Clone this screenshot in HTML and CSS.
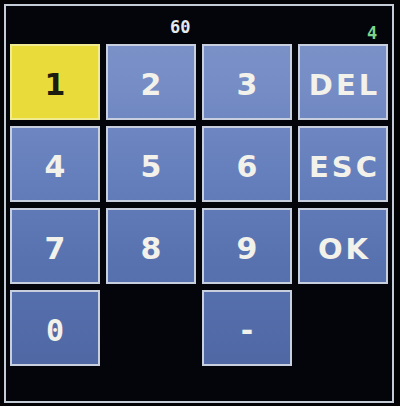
FILE: index.html
```html
<!DOCTYPE html>
<html>
<head>
<meta charset="utf-8">
<link rel="stylesheet" href="styles.css">
</head>
<body>
<div class="screen">
  <div class="header">
    <span class="value">60</span>
    <span class="count">4</span>
  </div>
  <div class="pad">
    <div class="key active">1</div>
    <div class="key">2</div>
    <div class="key">3</div>
    <div class="key word">DEL</div>
    <div class="key">4</div>
    <div class="key">5</div>
    <div class="key">6</div>
    <div class="key word">ESC</div>
    <div class="key">7</div>
    <div class="key">8</div>
    <div class="key">9</div>
    <div class="key word">OK</div>
    <div class="key zero">0</div>
    <div class="empty"></div>
    <div class="key">-</div>
    <div class="empty"></div>
  </div>
</div>
</body>
</html>
```
FILE: styles.css
```css
html, body {
  margin: 0;
  padding: 0;
  background: #030306;
  width: 400px;
  height: 406px;
  overflow: hidden;
}
.screen {
  margin: 4px 0 0 4px;
  width: 386px;
  height: 395px;
  border: 2px solid #c4ccd8;
  background: #04050a;
  display: flex;
  flex-direction: column;
}
.header {
  height: 38px;
  position: relative;
  font-family: "DejaVu Sans Mono", monospace;
  font-weight: bold;
}
.value {
  position: absolute;
  left: 164px;
  top: 11px;
  font-size: 17px;
  color: #e4e8f0;
}
.count {
  position: absolute;
  left: 361px;
  top: 17px;
  font-size: 17px;
  color: #7cd48c;
}
.pad {
  display: grid;
  grid-template-columns: repeat(4, 90px);
  grid-auto-rows: 76px;
  column-gap: 6px;
  row-gap: 6px;
  padding-left: 4px;
}
.key {
  box-sizing: border-box;
  border: 2px solid #c8d0e0;
  padding-top: 5px;
  background: linear-gradient(180deg, #7f96cb 0px, #758cc5 90px, #6680bd 170px, #5872b0 260px, #4f68a4 370px) fixed;
  color: #f2f1ea;
  display: flex;
  align-items: center;
  justify-content: center;
  font-family: "DejaVu Sans", sans-serif;
  font-weight: bold;
  font-size: 30px;
}
.word {
  letter-spacing: 3px;
  padding-left: 3px;
  font-size: 29px;
}
.zero {
  font-family: "DejaVu Sans Mono", monospace;
}
.active {
  background: #e9dc3a;
  border-color: #f0ea90;
  color: #1c1c10;
}
```
